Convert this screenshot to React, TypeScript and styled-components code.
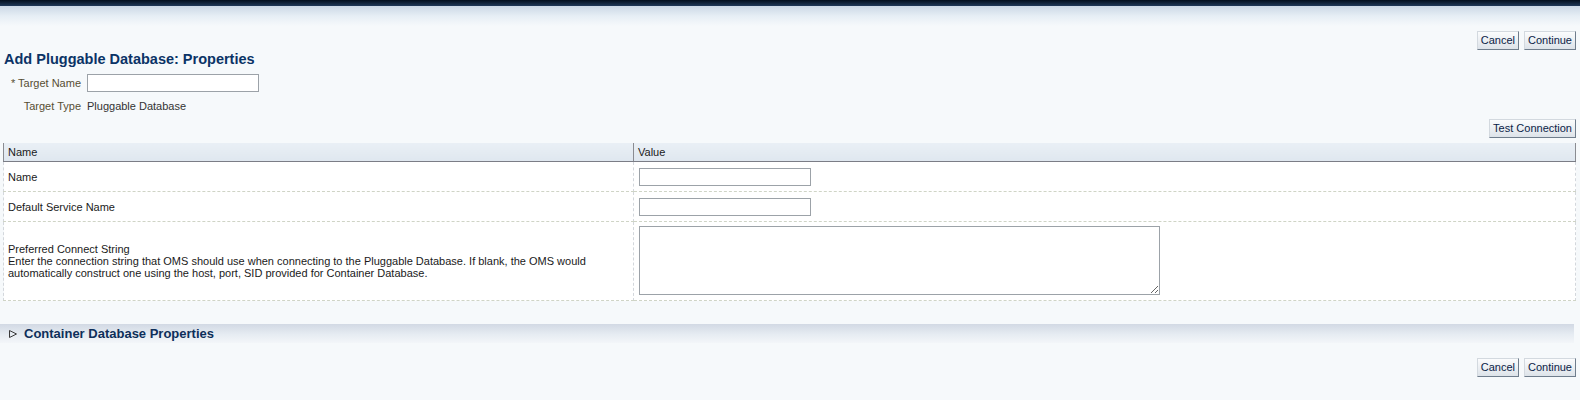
import React from 'react';
import styled, { createGlobalStyle } from 'styled-components';

const Global = createGlobalStyle`
  html, body { margin: 0; padding: 0; background: #f6f9fb; }
  body {
    font-family: "Liberation Sans", Arial, sans-serif;
    font-size: 11px;
    color: #222;
  }
`;

const TopBar = styled.div`
  height: 6px;
  background: linear-gradient(#020e1c, #1f3858);
`;

const TopFade = styled.div`
  height: 20px;
  background: linear-gradient(#cbd8e6, #e6eef5 50%, #f6f9fb);
`;

const Page = styled.div`
  padding: 0 4px 0 3px;
`;

const ButtonBar = styled.div<{ $top: number }>`
  display: flex;
  justify-content: flex-end;
  gap: 5px;
  margin-top: ${(p) => p.$top}px;
`;

const Button = styled.button`
  height: 19px;
  padding: 0 3px;
  font-family: "Liberation Sans", Arial, sans-serif;
  font-size: 11px;
  line-height: 17px;
  color: #0b2347;
  background: linear-gradient(#fbfcfd, #dde3e9);
  border: 1px solid;
  border-color: #d3d9df #6f7d8c #6f7d8c #d3d9df;
  cursor: pointer;
`;

const Heading = styled.h1`
  margin: 0;
  padding-left: 1px;
  font-size: 14.5px;
  line-height: 18px;
  font-weight: bold;
  color: #0b3366;
`;

const FormGrid = styled.div`
  display: grid;
  grid-template-columns: 78px auto;
  column-gap: 6px;
  row-gap: 7px;
  margin-top: 6px;
  align-items: center;
  justify-items: start;
`;

const Label = styled.label`
  justify-self: end;
  color: #574e33;
  line-height: 14px;
`;

const Value = styled.span`
  color: #333;
  line-height: 14px;
`;

const TextInput = styled.input`
  box-sizing: border-box;
  width: 172px;
  height: 18px;
  margin: 0;
  padding: 0 2px;
  border: 1px solid #9ca2a8;
  background: #fff;
  font-family: inherit;
  font-size: 11px;
`;

const Table = styled.table`
  width: 100%;
  margin-top: 5px;
  border-collapse: collapse;
  table-layout: fixed;
`;

const HeadCell = styled.th<{ $w?: string }>`
  ${(p) => (p.$w ? `width: ${p.$w};` : '')}
  height: 18px;
  padding: 0 4px;
  text-align: left;
  font-weight: normal;
  color: #1a1a1a;
  background: linear-gradient(#e9eff5, #dfe7ef);
  border-bottom: 1px solid #7b7d86;
  border-left: 1px solid #8a8c92;
  border-right: 1px solid #8a8c92;
`;

const Row = styled.tr<{ $h: number }>`
  height: ${(p) => p.$h}px;
`;

const Cell = styled.td`
  padding: 0 5px;
  vertical-align: middle;
  background: #fff;
  border-bottom: 1px dashed #cfd4c6;
  border-left: 1px dashed #d3d7dc;
  border-right: 1px dashed #d3d7dc;
  line-height: 12px;
  color: #1a1a1a;
`;

const NameCell = styled(Cell)`
  padding-left: 4px;
`;

const AreaCell = styled(Cell)`
  padding: 4px 5px 5px;
`;

const TextArea = styled.textarea`
  display: block;
  box-sizing: border-box;
  width: 521px;
  height: 69px;
  margin: 0;
  border: 1px solid #9ca2a8;
  background: #fff;
  font-family: inherit;
  font-size: 11px;
`;

const SectionBand = styled.div`
  display: flex;
  align-items: center;
  gap: 6px;
  height: 19px;
  margin: 23px 2px 0 -3px;
  padding-left: 8px;
  background: linear-gradient(#d2d9e4, #e6ecf2 55%, #f3f6f9);
`;

const SectionTitle = styled.h2`
  margin: 0;
  font-size: 13px;
  font-weight: bold;
  color: #0e2f5a;
`;

export default function App() {
  return (
    <>
      <Global />
      <TopBar />
      <TopFade />
      <Page>
        <ButtonBar $top={5}>
          <Button>Cancel</Button>
          <Button>Continue</Button>
        </ButtonBar>
        <Heading>Add Pluggable Database: Properties</Heading>
        <FormGrid>
          <Label>* Target Name</Label>
          <TextInput type="text" />
          <Label>Target Type</Label>
          <Value>Pluggable Database</Value>
        </FormGrid>
        <ButtonBar $top={6}>
          <Button>Test Connection</Button>
        </ButtonBar>
        <Table>
          <thead>
            <tr>
              <HeadCell $w="621px">Name</HeadCell>
              <HeadCell>Value</HeadCell>
            </tr>
          </thead>
          <tbody>
            <Row $h={30}>
              <NameCell>Name</NameCell>
              <Cell>
                <TextInput type="text" />
              </Cell>
            </Row>
            <Row $h={30}>
              <NameCell>Default Service Name</NameCell>
              <Cell>
                <TextInput type="text" />
              </Cell>
            </Row>
            <Row $h={79}>
              <NameCell>
                Preferred Connect String
                <br />
                Enter the connection string that OMS should use when connecting to the Pluggable Database. If blank, the OMS would
                <br />
                automatically construct one using the host, port, SID provided for Container Database.
              </NameCell>
              <AreaCell>
                <TextArea />
              </AreaCell>
            </Row>
          </tbody>
        </Table>
        <SectionBand>
          <svg width="10" height="10" viewBox="0 0 10 10">
            <polygon points="1.5,1.5 8.5,5 1.5,8.5" fill="none" stroke="#3a3a3a" strokeWidth="1" />
          </svg>
          <SectionTitle>Container Database Properties</SectionTitle>
        </SectionBand>
        <ButtonBar $top={15}>
          <Button>Cancel</Button>
          <Button>Continue</Button>
        </ButtonBar>
      </Page>
    </>
  );
}
